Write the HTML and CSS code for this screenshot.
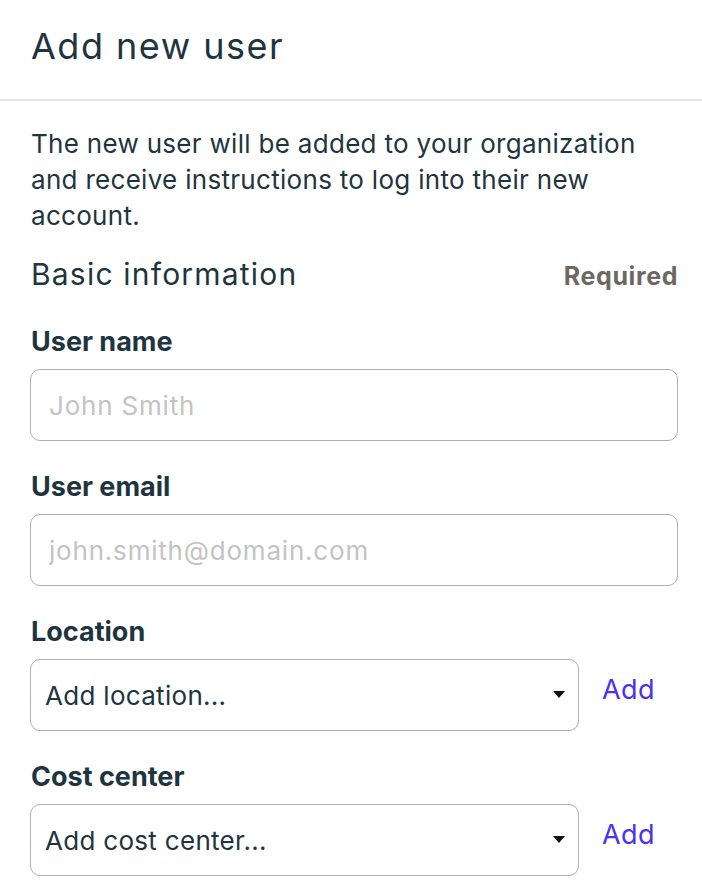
FILE: index.html
```html
<!DOCTYPE html>
<html lang="en">
<head>
<meta charset="utf-8">
<title>Add new user</title>
<link rel="stylesheet" href="styles.css">
</head>
<body>
<div class="panel">
  <header class="panel-header">
    <h1 class="panel-title">Add new user</h1>
  </header>
  <div class="panel-body">
    <p class="intro">The new user will be added to your organization and receive instructions to log into their new account.</p>
    <div class="section-head">
      <h2 class="section-title">Basic information</h2>
      <span class="required">Required</span>
    </div>
    <div class="field">
      <label class="field-label" for="uname">User name</label>
      <input class="text-input" id="uname" type="text" placeholder="John Smith">
    </div>
    <div class="field">
      <label class="field-label" for="uemail">User email</label>
      <input class="text-input" id="uemail" type="text" placeholder="john.smith@domain.com">
    </div>
    <div class="field">
      <div class="field-label">Location</div>
      <div class="select-row">
        <div class="select-box">
          <span class="select-value">Add location...</span>
          <svg class="caret" width="12" height="7" viewBox="0 0 12 7"><path d="M0 0H12L6 7Z" fill="#111"/></svg>
        </div>
        <a class="add-link" href="#">Add</a>
      </div>
    </div>
    <div class="field">
      <div class="field-label">Cost center</div>
      <div class="select-row">
        <div class="select-box">
          <span class="select-value">Add cost center...</span>
          <svg class="caret" width="12" height="7" viewBox="0 0 12 7"><path d="M0 0H12L6 7Z" fill="#111"/></svg>
        </div>
        <a class="add-link" href="#">Add</a>
      </div>
    </div>
  </div>
</div>
</body>
</html>
```

FILE: styles.css
```css
* { box-sizing: border-box; }

html, body {
  margin: 0;
  padding: 0;
  background: #ffffff;
}

body {
  font-family: Inter, "Liberation Sans", Arial, sans-serif;
  color: #1e3540;
}

.panel-header {
  height: 101px;
  padding: 28px 0 0 31px;
  border-bottom: 2px solid #e3e3df;
}

.panel-title {
  margin: 0;
  font-size: 36px;
  line-height: 36px;
  font-weight: 400;
  letter-spacing: 1.5px;
  color: #1e3540;
}

.panel-body {
  padding: 0 24px 0 30px;
}

.intro {
  margin: 25px 0 0 1px;
  font-size: 26px;
  line-height: 36px;
  letter-spacing: 0.3px;
}

.section-head {
  display: flex;
  justify-content: space-between;
  align-items: baseline;
  margin-top: 22px;
}

.section-title {
  margin: 0 0 0 1px;
  font-size: 30px;
  line-height: 36px;
  font-weight: 400;
  letter-spacing: 1.2px;
}

.required {
  font-size: 25px;
  line-height: 36px;
  font-weight: 700;
  letter-spacing: 0.6px;
  color: #6d6863;
}

.field {
  display: flex;
  flex-direction: column;
  margin-top: 32px;
}

.field + .field {
  margin-top: 30px;
}

.field-label {
  display: block;
  margin-left: 1px;
  font-size: 27px;
  line-height: 32px;
  font-weight: 700;
  color: #1e3540;
}

.text-input {
  margin-top: 11px;
  width: 100%;
  height: 72px;
  padding: 0 18px;
  border: 1px solid #b3aea9;
  border-radius: 10px;
  font-family: inherit;
  font-size: 26px;
  letter-spacing: 0.8px;
  color: #1e3540;
  background: #fff;
  outline: none;
}

.text-input::placeholder {
  color: #c3c3c3;
}

.select-row {
  display: flex;
  margin-top: 11px;
}

.select-box {
  flex: 1;
  height: 72px;
  display: flex;
  align-items: center;
  justify-content: space-between;
  padding: 0 13px 0 14px;
  border: 1px solid #b3aea9;
  border-radius: 10px;
}

.select-value {
  font-size: 26px;
  letter-spacing: 0.3px;
  color: #1e3540;
}

.caret {
  display: block;
  margin-top: -1px;
}

.add-link {
  width: 99px;
  padding-top: 15px;
  text-align: center;
  font-size: 27px;
  line-height: 32px;
  letter-spacing: 0.5px;
  color: #4b30f2;
  text-decoration: none;
}
```
